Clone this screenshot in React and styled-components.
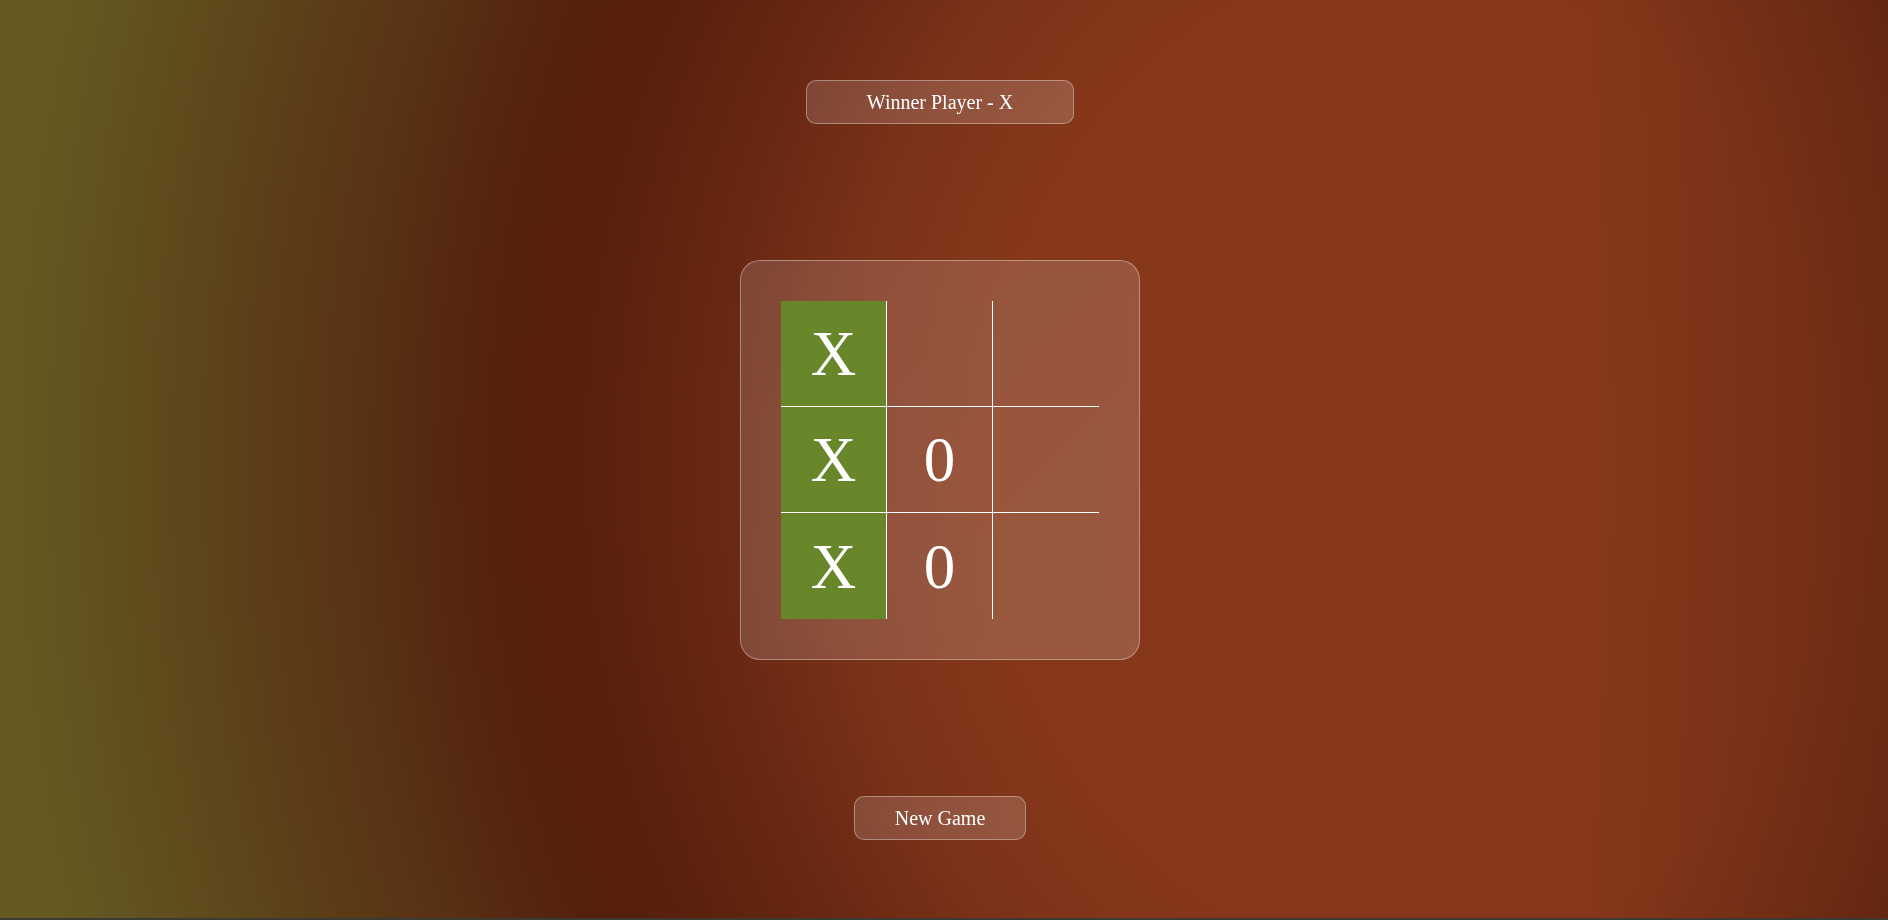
import React from 'react';
import styled, { createGlobalStyle } from 'styled-components';

const GlobalStyle = createGlobalStyle`
  html, body {
    margin: 0;
    padding: 0;
    background: #3b3a33;
  }

  body {
    font-family: "Liberation Serif", "Times New Roman", serif;
    color: #fff;
  }
`;

const Page = styled.main`
  height: 918px;
  box-sizing: border-box;
  padding: 80px 8px 0 0;
  display: flex;
  flex-direction: column;
  align-items: center;
  gap: 136px;
  background:
    linear-gradient(90deg, transparent 84%, rgba(70, 25, 8, 0.35) 100%),
    radial-gradient(1000px 1200px at 1400px 460px,
      #88391b 0,
      #86371a 420px,
      #7b3218 560px,
      #692813 680px,
      #5a210d 800px,
      #541f0c 885px,
      #562610 950px,
      #583114 1030px,
      #5b3c17 1130px,
      #5e481b 1230px,
      #615220 1320px,
      #655a22 1400px);
`;

const GlassBox = styled.div`
  box-sizing: border-box;
  background: linear-gradient(135deg, rgba(255, 255, 255, 0.14), rgba(255, 255, 255, 0.17));
  border: 1px solid rgba(255, 255, 255, 0.35);
  backdrop-filter: blur(4px);
`;

const Status = styled(GlassBox)`
  width: 268px;
  height: 44px;
  border-radius: 10px;
  display: flex;
  align-items: center;
  justify-content: center;
  font-size: 20px;
`;

const Board = styled(GlassBox)`
  width: 400px;
  height: 400px;
  border-radius: 20px;
  display: flex;
  align-items: center;
  justify-content: center;
`;

const Grid = styled.div`
  display: grid;
  grid-template-columns: repeat(3, 106px);
  grid-template-rows: repeat(3, 106px);
`;

const Cell = styled.div`
  box-sizing: border-box;
  display: flex;
  align-items: center;
  justify-content: center;
  font-size: 63px;
  line-height: 1;
  padding-top: 2px;
  background: ${props => (props.win ? '#68872b' : 'transparent')};
  border-right: ${props => (props.col < 2 ? '1px solid #fff' : 'none')};
  border-bottom: ${props => (props.row < 2 ? '1px solid #fff' : 'none')};
`;

const NewGame = styled(GlassBox).attrs({ as: 'button' })`
  width: 172px;
  height: 44px;
  border-radius: 10px;
  font-family: "Liberation Serif", "Times New Roman", serif;
  font-size: 20px;
  color: #fff;
  cursor: pointer;
`;

const cells = ['X', '', '', 'X', '0', '', 'X', '0', ''];
const winLine = [0, 3, 6];

const App = () => (
  <>
    <GlobalStyle />
    <Page>
      <Status>Winner Player - X</Status>
      <Board>
        <Grid>
          {cells.map((value, i) => (
            <Cell
              key={i}
              row={Math.floor(i / 3)}
              col={i % 3}
              win={winLine.includes(i)}
            >
              {value}
            </Cell>
          ))}
        </Grid>
      </Board>
      <NewGame>New Game</NewGame>
    </Page>
  </>
);

export default App;
